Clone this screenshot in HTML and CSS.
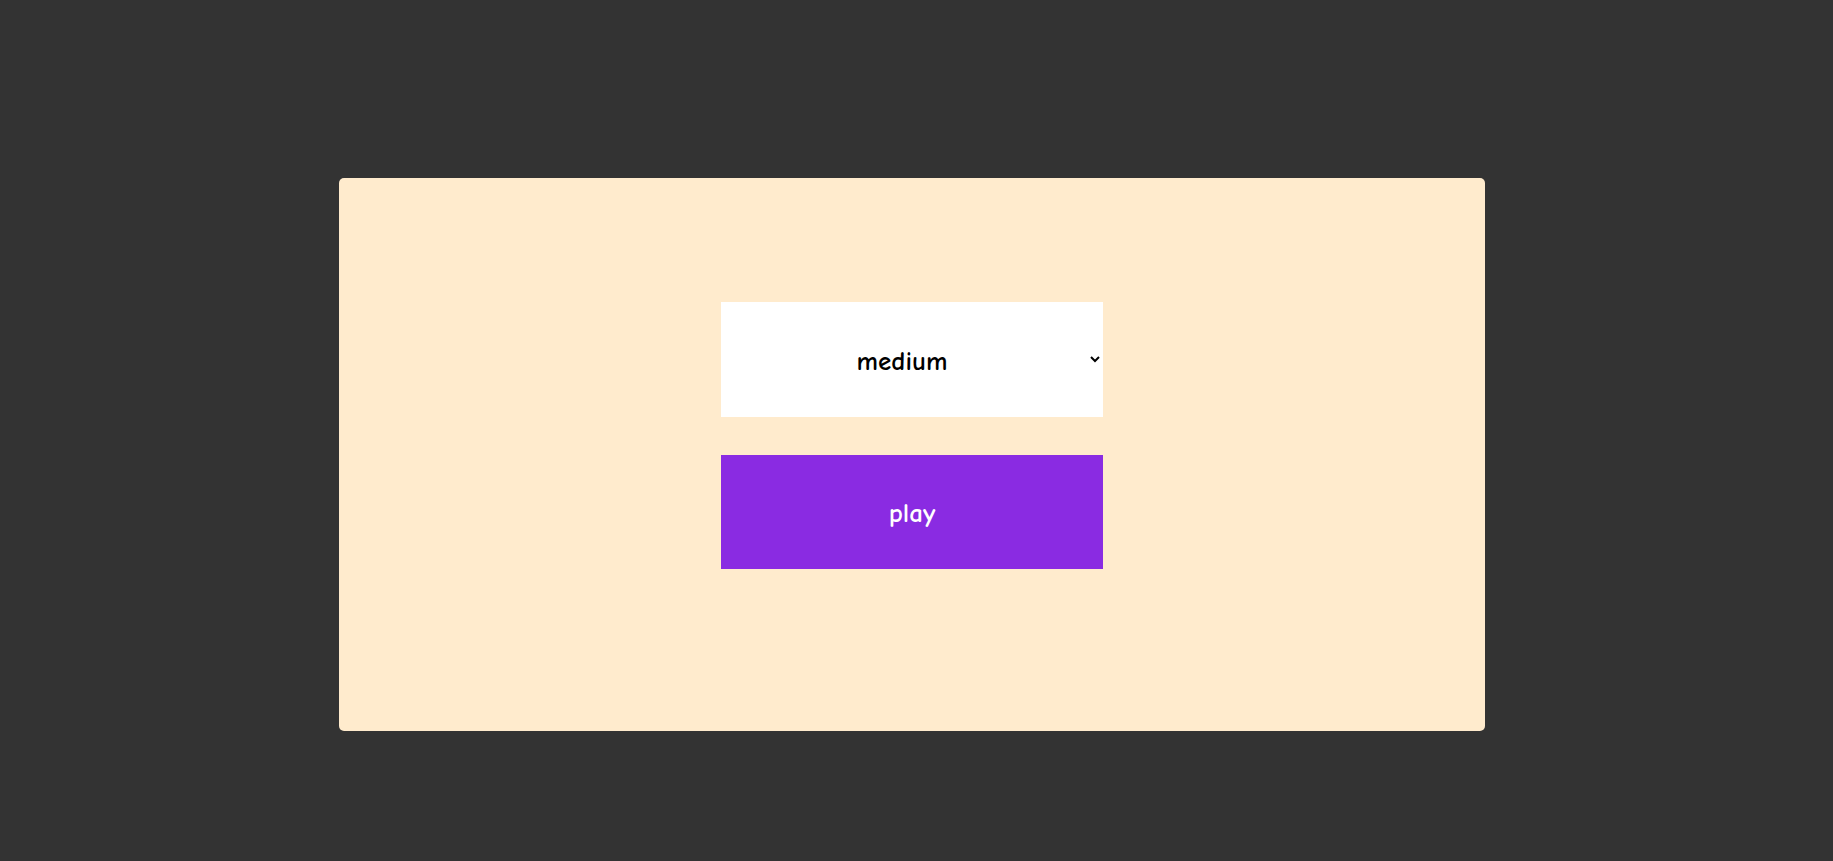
FILE: index.html
```html
<!DOCTYPE html>
<html>
<head>
<meta charset="utf-8">
<link rel="stylesheet" href="styles.css">
</head>
<body>
<div class="page">
  <div class="card">
    <select class="level">
      <option>easy</option>
      <option selected>medium</option>
      <option>hard</option>
    </select>
    <button class="play">play</button>
  </div>
</div>
</body>
</html>
```
FILE: styles.css
```css
html, body {
  margin: 0;
  padding: 0;
  background: #333333;
  height: 100%;
}
.page {
  display: flex;
  justify-content: flex-start;
  padding-top: 178px;
  padding-left: 339px;
}
.card {
  width: 1146px;
  height: 553px;
  box-sizing: border-box;
  background: #ffebcd;
  border-radius: 5px;
  display: flex;
  flex-direction: column;
  align-items: center;
  padding-top: 124px;
  gap: 38px;
  font-family: "Comic Sans MS", "Comic Neue", Lato, "Open Sans", sans-serif;
}
.level {
  width: 382px;
  height: 115px;
  border: none;
  background: #ffffff;
  color: #000;
  font-family: inherit;
  font-size: 27px;
  font-weight: 700;
  text-align: center;
  text-align-last: center;
  padding: 3px 8px 0 0;
  outline: none;
}
.play {
  width: 382px;
  height: 114px;
  border: none;
  background: #8a2be2;
  color: #ffffff;
  font-family: inherit;
  font-size: 27px;
  font-weight: 700;
  padding-top: 4px;
  cursor: pointer;
}
```
